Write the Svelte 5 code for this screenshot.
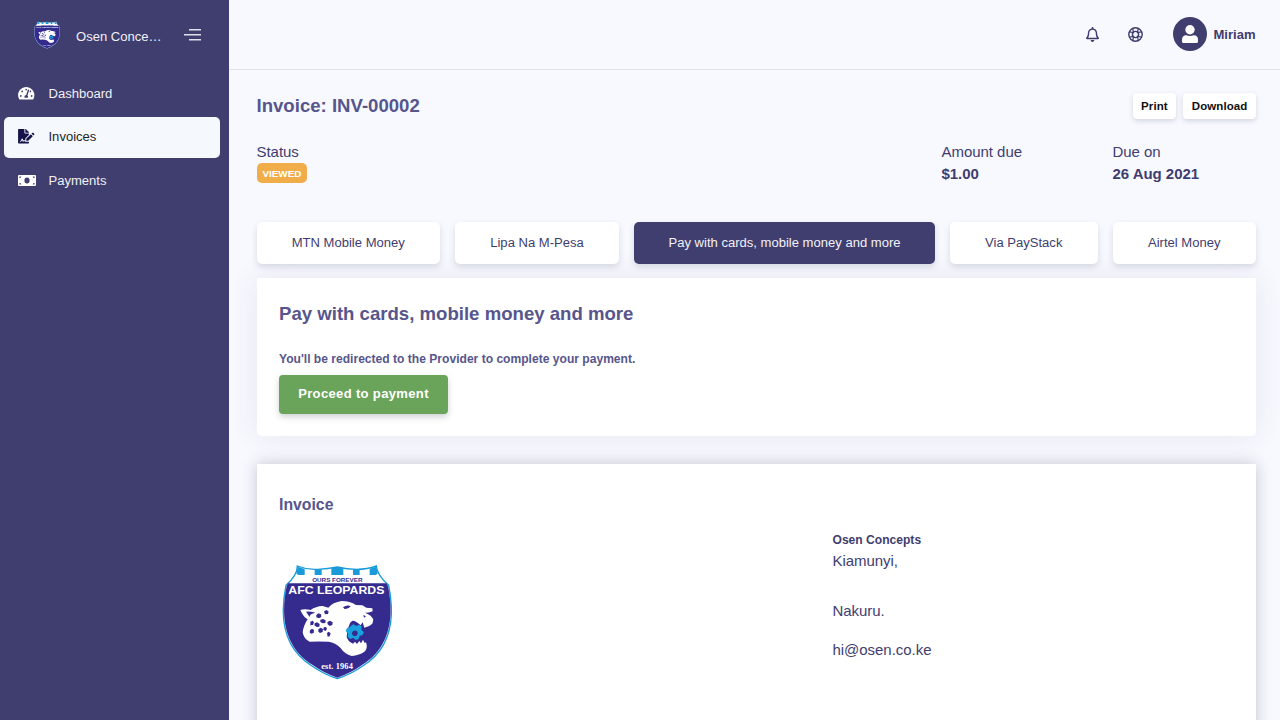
<script>
  const methods = [
    'MTN Mobile Money',
    'Lipa Na M-Pesa',
    'Pay with cards, mobile money and more',
    'Via PayStack',
    'Airtel Money'
  ];
  let selected = $state(2);
</script>

{#snippet crest()}
  <svg class="crest" viewBox="36 27 330 348" aria-label="AFC Leopards crest">
    <path d="M82 33 Q112 45 143 43 Q174 42 202 36 Q230 43 260 43 Q292 43 319 33 C321 55 338 75 356 91 C374 180 367 278 278 333 Q244 357 202 371 Q160 357 126 333 C37 278 30 180 48 91 C66 75 82 55 82 33Z" fill="#fff" stroke="#189bd8" stroke-width="4" />
    <path d="M54 85 H350 L354 94 C372 180 364 276 276 330 Q243 354 202 368 Q161 354 128 330 C40 276 32 180 50 94Z" fill="#352b8f" />
    <path d="M83 35 L104 42 V60 H86 L79 56ZM134 44 L155 43 V60 H134ZM184 40 L202 36 L220 40 V60 H184ZM249 43 L269 43 V60 H249ZM299 41 L319 35 L323 56 L317 60 H299Z" fill="#189bd8" />
    <text x="202" y="81" text-anchor="middle" font-size="18" font-weight="bold" fill="#352b8f" textLength="151" lengthAdjust="spacingAndGlyphs">OURS FOREVER</text>
    <text x="199" y="116" text-anchor="middle" font-size="30" font-weight="bold" fill="#fff" textLength="288" lengthAdjust="spacingAndGlyphs">AFC LEOPARDS</text>
    <path d="M91 165 Q103 161 122 165 Q137 154 158 153 L175 158 Q188 142 215 138 Q240 138 258 150 L277 151 L289 158 L307 160 L308 169 Q298 174 285 173 Q306 181 310 194 L307 206 Q297 216 283 218 L278 202 L272 211 Q259 197 247 197 Q239 201 237 212 L232 227 L230 246 Q235 261 249 266 L255 260 L261 267 L268 258 L273 265 L279 254 L284 264 L288 262 Q294 279 285 289 Q268 302 245 303 Q224 297 211 278 Q196 263 176 260 Q145 259 119 260 Q101 252 98 232 Q101 210 113 193 Q101 188 91 165Z" fill="#fff" />
    <path d="M108 170 Q122 169 136 173 Q119 176 119 186ZM219 157 Q232 148 242 154 Q236 163 224 162ZM280 180 L288 184 L282 188Z" fill="#352b8f" />
    <path fill="#352b8f" d="M139 180l6-5 8 3 1 8-7 4-8-3zM162 169l8-4 6 5-2 7-9 1zM151 194l8-2 8 4-1 8-8 1-7-4zM172 201l8-4 8 5-1 8-8 3-6-5zM134 205l7-3 8 5-1 8-8 1-7-5zM121 200l7-3 4 5-3 8-8 1zM145 223l7-5 7 4-1 9-8 3-5-4zM161 217l7-1 3 5-4 7-7-3zM120 226l6-5 6 4-1 9-8 2-4-4zM171 234l5-4 6 5-3 9-6 1z" />
    <path d="M242 213l8-5 9 5 8-4 8 5-1 10 8 8-5 9-8 1-3 10-9 3-7-7-9 4-8-6 1-10-7-8 4-9 9-2z" fill="#18a0df" />
    <path d="M250 227h10l4 8-5 8h-9l-5-8z" fill="#352b8f" />
    <text class="est" x="201" y="341" text-anchor="middle" font-size="25" font-weight="bold" fill="#fff" textLength="95">est. 1964</text>
  </svg>
{/snippet}

<div class="app">
  <aside>
    <div class="brand">
      <span class="brand-logo">{@render crest()}</span>
      <span class="name">Osen Conce…</span>
      <svg class="toggle" width="18" height="14" viewBox="0 0 18 14" fill="none" stroke="#e0e0ec" stroke-width="1.500"><path d="M5 1.800h12M0 6.800h17M5 11.800h12" /></svg>
    </div>
    <nav>
      <a href="#dashboard">
        <span class="icon"><svg width="16.500" height="14.500" viewBox="0 0 576 512"><path fill="currentColor" d="M288 32C128.940 32 0 160.940 0 320c0 52.800 14.250 102.260 39.060 144.800 5.610 9.620 16.300 15.200 27.440 15.200h443c11.140 0 21.830-5.580 27.440-15.200C561.750 422.260 576 372.800 576 320c0-159.060-128.940-288-288-288zm0 64c14.710 0 26.580 10.130 30.320 23.650-1.110 2.260-2.640 4.230-3.450 6.670l-9.220 27.670c-5.130 3.490-10.970 6.010-17.640 6.010-17.670 0-32-14.330-32-32S270.330 96 288 96zM96 384c-17.670 0-32-14.330-32-32s14.330-32 32-32 32 14.330 32 32-14.330 32-32 32zm48-160c-17.670 0-32-14.330-32-32s14.330-32 32-32 32 14.330 32 32-14.330 32-32 32zm246.770-72.410l-61.330 184C343.130 347.330 352 364.540 352 384c0 11.720-3.380 22.550-8.880 32H232.880c-5.500-9.450-8.880-20.280-8.880-32 0-33.940 26.500-61.430 59.900-63.590l61.340-184.010c4.170-12.560 17.730-19.450 30.360-15.170 12.570 4.190 19.350 17.790 15.170 30.360zm14.660 57.200l15.520-46.550c3.470-1.290 7.130-2.230 11.050-2.230 17.670 0 32 14.330 32 32s-14.330 32-32 32c-11.380-.01-21.250-6.100-26.570-15.220zM480 384c-17.670 0-32-14.330-32-32s14.330-32 32-32 32 14.330 32 32-14.330 32-32 32z" /></svg></span>
        Dashboard
      </a>
      <a href="#invoices" class="active">
        <span class="icon"><svg width="16.500" height="14.500" viewBox="0 0 576 512"><path fill="currentColor" d="M218.170 424.140c-2.950-5.920-8.090-6.520-10.170-6.520s-7.220.59-10.020 6.190l-7.670 15.340c-6.370 12.780-25.030 11.370-29.480-2.090L144 386.590l-10.610 31.880c-5.890 17.660-22.380 29.530-41 29.530H80c-8.840 0-16-7.160-16-16s7.160-16 16-16h12.390c4.830 0 9.110-3.080 10.640-7.660l18.190-54.640c3.300-9.810 12.440-16.410 22.780-16.410s19.480 6.590 22.770 16.410l13.880 41.640c19.750-16.190 54.060-9.700 66 14.160 1.890 3.780 5.490 5.950 9.360 6.260v-82.120l128-127.090V160H248c-13.200 0-24-10.800-24-24V0H24C10.700 0 0 10.700 0 24v464c0 13.300 10.700 24 24 24h336c13.300 0 24-10.700 24-24v-40l-128-.11c-16.120-.31-30.580-9.280-37.830-23.750zM384 121.900c0-6.300-2.500-12.400-7-16.900L279.100 7c-4.500-4.500-10.600-7-17-7H256v128h128v-6.100zm-96 225.060V416h68.990l161.680-162.780-67.880-67.880L288 346.960zm280.540-179.630l-31.870-31.870c-9.940-9.940-26.070-9.940-36.010 0l-27.250 27.250 67.880 67.880 27.250-27.250c9.950-9.940 9.950-26.070 0-36.010z" /></svg></span>
        Invoices
      </a>
      <a href="#payments">
        <span class="icon"><svg width="18" height="11" viewBox="0 0 18 11"><path fill="currentColor" fill-rule="evenodd" d="M1 0h16q1 0 1 1v9q0 1-1 1H1q-1 0-1-1V1q0-1 1-1zm.5 1.500v1.800q1.500 0 1.800-1.800zm13.200 0q.3 1.800 1.800 1.800V1.500zM1.500 7.700v1.800h1.800q-.3-1.800-1.800-1.800zm15 0q-1.500 0-1.800 1.800h1.800zM9 2.500q-2.600 0-2.600 3T9 8.500t2.600-3-2.600-3z" /></svg></span>
        Payments
      </a>
    </nav>
  </aside>

  <div class="page">
    <header>
      <svg class="bell" width="13" height="15" viewBox="0 0 448 512"><path fill="currentColor" d="M439 362c-19-21-55-52-55-154 0-78-54-140-128-155V32a32 32 0 1 0-64 0v21C118 68 64 130 64 208c0 102-36 133-55 154-6 6-9 14-9 22 0 16 13 32 32 32h384c19 0 32-16 32-32 0-8-3-16-9-22zM68 368c21-28 44-74 44-159v-1c0-62 50-112 112-112s112 50 112 112v1c0 85 23 131 44 159zM224 512c35 0 64-29 64-64H160c0 35 29 64 64 64z" /></svg>
      <svg class="ring" width="15" height="15" viewBox="0 0 15 15" fill="none" stroke="currentColor"><circle cx="7.500" cy="7.500" r="6.700" stroke-width="1.400" /><circle cx="7.500" cy="7.500" r="3.100" stroke-width="1.400" /><path stroke-width="1.200" d="M4.800 1.400 5.500 5.500 1.400 4.800M10.200 1.400l-.7 4.100 4.100-.7M4.800 13.600l.7-4.100-4.100.7M10.200 13.600l-.7-4.100 4.100.7" /></svg>
      <span class="avatar"><svg width="16" height="18" viewBox="0 0 16 18" fill="#fff"><circle cx="8" cy="4.800" r="4.700" /><path d="M4.300 10.300q3.700 1.500 7.400 0Q16 10.300 16 14.800v1.600Q16 18 14.400 18H1.600Q0 18 0 16.400v-1.600q0-4.500 4.300-4.500z" /></svg></span>
      <b>Miriam</b>
    </header>

    <main>
      <div class="title">
        <h1>Invoice: INV-00002</h1>
        <button>Print</button>
        <button>Download</button>
      </div>

      <section class="summary">
        <div><span>Status</span><em>VIEWED</em></div>
        <div><span>Amount due</span><strong>$1.00</strong></div>
        <div><span>Due on</span><strong>26 Aug 2021</strong></div>
      </section>

      <div class="methods">
        {#each methods as method, i}
          <button class:selected={selected === i} onclick={() => (selected = i)}>{method}</button>
        {/each}
      </div>

      <section class="card pay">
        <h2>{methods[selected]}</h2>
        <p>You'll be redirected to the Provider to complete your payment.</p>
        <button>Proceed to payment</button>
      </section>

      <section class="card invoice">
        <h3>Invoice</h3>
        <div class="parties">
          <div class="invoice-logo">{@render crest()}</div>
          <address>
            <b>Osen Concepts</b>
            <span>Kiamunyi,</span>
            <span class="city">Nakuru.</span>
            <span class="mail">hi@osen.co.ke</span>
          </address>
        </div>
      </section>
    </main>
  </div>
</div>

<style>
  :global(body) { margin: 0; overflow: hidden; }
  * { box-sizing: border-box; }
  .app { display: flex; width: 1280px; height: 720px; overflow: hidden; background: #f8f9ff; color: #3f3d6e; font: 15px/22px "Liberation Sans", Arial, sans-serif; letter-spacing: -.04px; }
  button { font: inherit; border: 0; padding: 0; }
  h1, h2, h3, p { margin: 0; }

  aside { width: 228.500px; flex: none; background: #3f3e6e; color: #f0f0f6; font-size: 13.050px; letter-spacing: 0; }
  .brand { display: flex; align-items: center; height: 70px; padding-left: 34px; }
  .brand-logo { width: 26px; height: 28px; display: flex; }
  .crest { letter-spacing: 0; }
  .brand-logo .crest { width: 26px; height: 28px; }
  .name { width: 94px; margin-left: 16px; padding-top: 3px; }
  .toggle { margin-left: 14px; }
  nav { display: grid; grid-template-rows: 41px 41px 41px; gap: 2.700px; padding: 3px 8.500px 0 4px; }
  nav a { display: flex; align-items: center; padding: 0 0 0 14px; border-radius: 5px; color: inherit; text-decoration: none; }
  nav .icon { width: 30.500px; height: 15px; margin-bottom: 1px; display: flex; align-items: center; color: #fff; }
  nav .active { background: #f5f9fd; color: #212529; }
  nav .active .icon { color: #16134a; }

  .page { flex: 1; min-width: 0; }
  header { display: flex; align-items: center; justify-content: flex-end; height: 70px; padding: 0 24.500px 1px 0; border-bottom: 1px solid #e2e4ec; font-size: 13.050px; letter-spacing: 0; }
  header b { padding-top: 1px; }
  .ring { margin: 0 29.500px; }
  .avatar { display: flex; align-items: center; justify-content: center; width: 34px; height: 34px; margin-right: 6.500px; border-radius: 50%; background: #3f3e6e; }

  main { padding: 23px 24px 0 28px; }
  .title { display: flex; gap: 7px; height: 26px; }
  h1 { flex: 1; font-size: 18.600px; line-height: 26px; letter-spacing: 0; color: #56568c; }
  .title button { height: 26px; padding: 0 8.500px; border-radius: 4px; background: #fff; color: #111; font-size: 11.500px; font-weight: 700; letter-spacing: .1px; box-shadow: 0 2px 5px #35405b30; }
  .summary { display: grid; grid-template-columns: 1fr 171px 143.500px; height: 81px; margin-top: 22px; }
  .summary div { display: flex; flex-direction: column; align-items: flex-start; }
  .summary span { height: 22px; line-height: 21px; }
  .summary strong { line-height: 21px; }
  .summary em { height: 19.500px; padding: 0 6px; border-radius: 5px; background: #f0ad4a; color: #fff; font: bold 9.850px/21px "Liberation Sans", Arial, sans-serif; letter-spacing: 0; }
  .methods { display: grid; grid-template-columns: 183.500px 164.500px 301px 148px 143.500px; justify-content: space-between; }
  .methods button { position: relative; height: 41.500px; border-radius: 5px; background: #fff; color: #3f3d6e; font-size: 13.050px; letter-spacing: 0; box-shadow: 0 3px 6px #35405b2b; }
  .methods .selected { background: #3f3e6e; color: #f2f2f8; }

  .card { background: #fff; padding: 0 22.500px; }
  .pay { height: 158px; margin-top: 14.500px; padding-top: 25px; border-radius: 0 0 5px 5px; box-shadow: 0 0 30px #38435518; }
  h2 { font-size: 18.600px; letter-spacing: 0; color: #56568c; }
  .pay p { margin-top: 23px; font-size: 12.080px; letter-spacing: 0; font-weight: 700; color: #56568c; }
  .pay button { width: 169px; height: 39px; margin-top: 5px; padding-bottom: 1px; border-radius: 4px; background: #6aa35a; color: #fff; font-size: 13.050px; font-weight: 700; letter-spacing: .33px; box-shadow: 0 3px 6px #202c3b38; }
  .invoice { height: 300px; margin-top: 27.500px; padding-top: 30px; box-shadow: 0 0 14px #32374b45; }
  h3 { font-size: 15.800px; letter-spacing: 0; color: #56568c; }
  .parties { display: grid; grid-template-columns: 553.500px 1fr; margin-top: 13px; }
  .invoice-logo { padding: 35px 0 0 3px; }
  .invoice-logo .crest { width: 110px; height: 116px; }
  address { display: flex; flex-direction: column; font-style: normal; }
  address b { height: 21px; font-size: 12.080px; letter-spacing: 0; }
  .city { margin-top: 28px; }
  .mail { margin-top: 17px; }
  .est { font-family: "Liberation Serif", serif; }
</style>
